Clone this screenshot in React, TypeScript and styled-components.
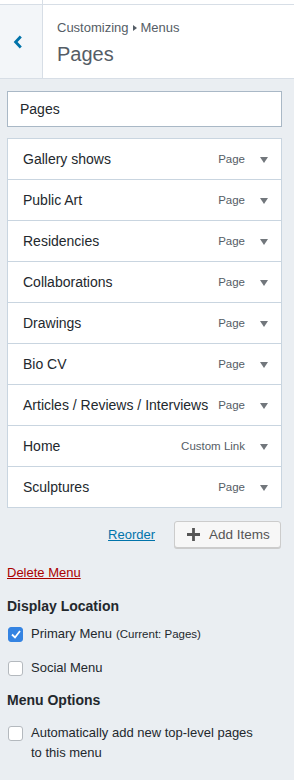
import React from "react";
import styled, { createGlobalStyle } from "styled-components";

const Global = createGlobalStyle`
  html, body { margin: 0; padding: 0; }
  body {
    background: #eaeef2;
    font-family: "Liberation Sans", "Noto Sans", sans-serif;
    color: #23282d;
    width: 294px;
    min-height: 780px;
  }
  * { box-sizing: border-box; }
`;

const Page = styled.div`
  width: 294px;
  min-height: 780px;
  background: #eaeef2;
  display: flex;
  flex-direction: column;
`;

const TopStrip = styled.div`
  height: 5px;
  background: #fff;
  border-bottom: 1px solid #d7dee6;
  display: flex;
`;

const TopStripLeft = styled.div`
  width: 43px;
  border-right: 1px solid #d7dee6;
`;

const Header = styled.div`
  display: flex;
  height: 74px;
  background: #fff;
  border-bottom: 1px solid #d7dee6;
`;

const BackButton = styled.button`
  width: 43px;
  border: none;
  border-right: 1px solid #d7dee6;
  background: #f3f6f9;
  display: flex;
  align-items: center;
  justify-content: flex-start;
  padding: 0 0 0 13px;
  color: #0073aa;
`;

const HeaderText = styled.div`
  display: flex;
  flex-direction: column;
  padding: 14px 0 0 14px;
`;

const Crumb = styled.div`
  font-size: 13px;
  color: #555d66;
  line-height: 17px;
  display: flex;
  align-items: center;
  gap: 4px;
`;

const Tri = styled.span`
  display: inline-block;
  width: 0;
  height: 0;
  border-top: 3px solid transparent;
  border-bottom: 3px solid transparent;
  border-left: 4px solid #555d66;
`;

const Title = styled.h1`
  margin: 6px 0 0;
  font-size: 20px;
  font-weight: 400;
  color: #555d66;
  line-height: 24px;
`;

const Body = styled.div`
  padding: 12px 12px 0 7px;
  display: flex;
  flex-direction: column;
`;

const NameInput = styled.div`
  height: 36px;
  border: 1px solid #a9b8c6;
  background: #fff;
  display: flex;
  align-items: center;
  padding-left: 12px;
  font-size: 14px;
  color: #23282d;
`;

const List = styled.ul`
  list-style: none;
  margin: 11px 0 0;
  padding: 0;
  border: 1px solid #c9d5e0;
  background: #fff;
`;

const Row = styled.li`
  height: 41px;
  display: flex;
  align-items: center;
  padding: 0 13px 0 15px;
  border-top: 1px solid #c9d5e0;
  &:first-child { border-top: none; height: 40px; }
`;

const RowTitle = styled.span`
  flex: 1;
  font-size: 14px;
  color: #23282d;
  white-space: nowrap;
`;

const RowType = styled.span`
  font-size: 11.5px;
  color: #555d66;
  margin-right: 15px;
`;

const Arrow = styled.span`
  display: inline-block;
  width: 0;
  height: 0;
  border-left: 4px solid transparent;
  border-right: 4px solid transparent;
  border-top: 6px solid #72777c;
  margin-top: 1px;
`;

const Actions = styled.div`
  display: flex;
  justify-content: flex-end;
  align-items: center;
  gap: 19px;
  margin-top: 13px;
  padding-right: 1px;
`;

const LinkText = styled.a<{ $danger?: boolean }>`
  font-size: 13px;
  color: ${(p) => (p.$danger ? "#a00" : "#0073aa")};
  text-decoration: underline;
  cursor: pointer;
`;

const AddButton = styled.button`
  height: 27px;
  width: 107px;
  border: 1px solid #ccc;
  border-radius: 3px;
  background: #f7f7f7;
  box-shadow: 0 1px 0 #ccc;
  display: flex;
  align-items: center;
  gap: 9px;
  padding: 0 0 0 12px;
  font-family: inherit;
  font-size: 13.5px;
  color: #555;
`;

const DeleteRow = styled.div`
  margin-top: 16px;
  line-height: 16px;
  height: 16px;
`;

const SectionTitle = styled.h3<{ $top: number }>`
  margin: ${(p) => p.$top}px 0 0;
  font-size: 14px;
  font-weight: 700;
  color: #23282d;
  line-height: 18px;
`;

const CheckRow = styled.label<{ $top: number }>`
  display: flex;
  align-items: flex-start;
  gap: 8px;
  margin-top: ${(p) => p.$top}px;
  font-size: 13px;
  line-height: 20px;
  color: #23282d;
  padding: 0 18px 0 1px;
`;

const Box = styled.span<{ $checked?: boolean }>`
  flex: none;
  width: 15px;
  height: 15px;
  margin-top: 3px;
  border-radius: 3px;
  border: 1px solid ${(p) => (p.$checked ? "#3483e2" : "#b4b9be")};
  background: ${(p) => (p.$checked ? "#3483e2" : "#fff")};
  display: flex;
  align-items: center;
  justify-content: center;
`;

const Small = styled.span`
  font-size: 11.5px;
  margin-left: 4px;
`;

const items: [string, string][] = [
  ["Gallery shows", "Page"],
  ["Public Art", "Page"],
  ["Residencies", "Page"],
  ["Collaborations", "Page"],
  ["Drawings", "Page"],
  ["Bio CV", "Page"],
  ["Articles / Reviews / Interviews", "Page"],
  ["Home", "Custom Link"],
  ["Sculptures", "Page"],
];

export default function App() {
  return (
    <Page>
      <Global />
      <TopStrip>
        <TopStripLeft />
      </TopStrip>
      <Header>
        <BackButton aria-label="Back">
          <svg width="10" height="14" viewBox="0 0 10 14">
            <path d="M7.8 1.5 L2.6 7 L7.8 12.5" fill="none" stroke="#0073aa" strokeWidth="2.8" />
          </svg>
        </BackButton>
        <HeaderText>
          <Crumb>
            Customizing <Tri /> Menus
          </Crumb>
          <Title>Pages</Title>
        </HeaderText>
      </Header>
      <Body>
        <NameInput>Pages</NameInput>
        <List>
          {items.map(([t, k]) => (
            <Row key={t}>
              <RowTitle>{t}</RowTitle>
              <RowType>{k}</RowType>
              <Arrow />
            </Row>
          ))}
        </List>
        <Actions>
          <LinkText>Reorder</LinkText>
          <AddButton>
            <svg width="13" height="13" viewBox="0 0 13 13">
              <path d="M6.5 0 V13 M0 6.5 H13" stroke="#555" strokeWidth="2.8" />
            </svg>
            Add Items
          </AddButton>
        </Actions>
        <DeleteRow>
          <LinkText $danger>Delete Menu</LinkText>
        </DeleteRow>
        <SectionTitle $top={17}>Display Location</SectionTitle>
        <CheckRow $top={9}>
          <Box $checked>
            <svg width="10" height="9" viewBox="0 0 10 9">
              <path d="M1 4.5 L4 7.5 L9 1" fill="none" stroke="#fff" strokeWidth="1.8" />
            </svg>
          </Box>
          <span>
            Primary Menu<Small>(Current: Pages)</Small>
          </span>
        </CheckRow>
        <CheckRow $top={14}>
          <Box />
          <span>Social Menu</span>
        </CheckRow>
        <SectionTitle $top={13}>Menu Options</SectionTitle>
        <CheckRow $top={14}>
          <Box />
          <span>Automatically add new top-level pages to this menu</span>
        </CheckRow>
      </Body>
    </Page>
  );
}
